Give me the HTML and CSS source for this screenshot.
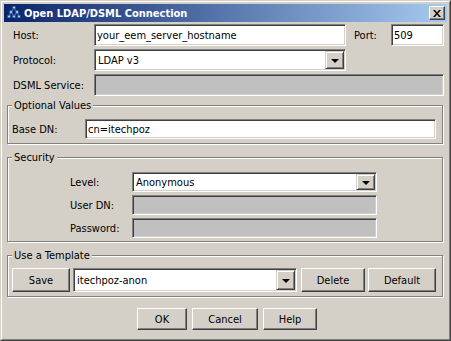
FILE: index.html
```html
<!DOCTYPE html>
<html lang="en">
<head>
    <meta charset="UTF-8">
    <title>Open LDAP/DSML Connection</title>
    <link rel="stylesheet" href="styles.css">
</head>
<body>
    <div class="window">
        <div class="frame">
            <div class="title-bar">
                <svg class="title-icon" viewBox="0 0 16 16" width="16" height="16">
                    <g stroke="#5a86c8" stroke-width="1">
                        <line x1="8" y1="3" x2="5" y2="7"/>
                        <line x1="8" y1="3" x2="11" y2="7"/>
                        <line x1="5" y1="7" x2="3" y2="11"/>
                        <line x1="5" y1="7" x2="8" y2="11"/>
                        <line x1="11" y1="7" x2="8" y2="11"/>
                        <line x1="11" y1="7" x2="13" y2="11"/>
                    </g>
                    <g fill="#b8d4f4" stroke="#2d5aa0" stroke-width="0.6">
                        <rect x="6.8" y="1.3" width="2.4" height="2.4"/>
                        <rect x="3.8" y="5.8" width="2.4" height="2.4"/>
                        <rect x="9.8" y="5.8" width="2.4" height="2.4"/>
                        <rect x="1.8" y="10.3" width="2.4" height="2.4"/>
                        <rect x="6.8" y="10.3" width="2.4" height="2.4"/>
                        <rect x="11.8" y="10.3" width="2.4" height="2.4"/>
                    </g>
                </svg>
                <span class="title-text">Open LDAP/DSML Connection</span>
                <button class="close-btn" aria-label="Close">
                    <svg viewBox="0 0 8 7" width="8" height="7">
                        <path d="M0 0h2l2 2.5 2-2.5h2l-3 3.5 3 3.5h-2l-2-2.5-2 2.5h-2l3-3.5z" fill="#000"/>
                    </svg>
                </button>
            </div>

            <div class="client">
                <div class="connection-grid">
                    <span class="field-label">Host:</span>
                    <input class="text-field" type="text" value="your_eem_server_hostname">
                    <span class="field-label port-label">Port:</span>
                    <input class="text-field" type="text" value="509">

                    <span class="field-label">Protocol:</span>
                    <div class="combo">
                        <span class="combo-value">LDAP v3</span>
                        <span class="combo-arrow"></span>
                    </div>
                    <span></span>
                    <span></span>

                    <span class="field-label">DSML Service:</span>
                    <input class="text-field dsml-field" type="text" disabled>
                </div>

                <fieldset class="group optional-group">
                    <legend>Optional Values</legend>
                    <div class="base-grid">
                        <span class="field-label">Base DN:</span>
                        <input class="text-field small" type="text" value="cn=itechpoz">
                    </div>
                </fieldset>

                <fieldset class="group security-group">
                    <legend>Security</legend>
                    <div class="security-grid">
                        <span class="field-label">Level:</span>
                        <div class="combo small">
                            <span class="combo-value">Anonymous</span>
                            <span class="combo-arrow"></span>
                        </div>
                        <span class="field-label">User DN:</span>
                        <input class="text-field small" type="text" disabled>
                        <span class="field-label">Password:</span>
                        <input class="text-field small" type="password" disabled>
                    </div>
                </fieldset>

                <fieldset class="group template-group">
                    <legend>Use a Template</legend>
                    <div class="template-row">
                        <button class="btn save-btn">Save</button>
                        <div class="combo template-combo">
                            <span class="combo-value">itechpoz-anon</span>
                            <span class="combo-arrow"></span>
                        </div>
                        <button class="btn delete-btn">Delete</button>
                        <button class="btn default-btn">Default</button>
                    </div>
                </fieldset>

                <div class="dialog-buttons">
                    <button class="btn ok-btn">OK</button>
                    <button class="btn cancel-btn">Cancel</button>
                    <button class="btn help-btn">Help</button>
                </div>
            </div>
        </div>
    </div>
</body>
</html>
```

FILE: styles.css
```css
body, html {
    margin: 0;
    padding: 0;
    background-color: #D4D0C8;
}
body {
    font-family: "DejaVu Sans Condensed", "Liberation Sans", sans-serif;
    font-size: 11px;
    color: #000;
}

/* window frame, classic raised bevel */
.window {
    width: 451px;
    height: 341px;
    box-sizing: border-box;
    border: 1px solid;
    border-color: #D4D0C8 #404040 #404040 #D4D0C8;
}
.frame {
    height: 100%;
    box-sizing: border-box;
    border: 1px solid;
    border-color: #FFFFFF #808080 #808080 #FFFFFF;
    padding: 2px;
    display: flex;
    flex-direction: column;
}

.title-bar {
    height: 18px;
    flex: none;
    display: flex;
    align-items: center;
    padding: 0 2px;
    background: linear-gradient(to right, #0A246A, #A6CAF0);
}
.title-icon {
    flex: none;
    margin-right: 2px;
}
.title-text {
    flex: 1;
    color: #FFFFFF;
    font-weight: bold;
    font-size: 11px;
    white-space: nowrap;
}
.close-btn {
    flex: none;
    width: 16px;
    height: 14px;
    padding: 0;
    display: flex;
    align-items: center;
    justify-content: center;
    background: #D4D0C8;
    border: 1px solid;
    border-color: #FFFFFF #404040 #404040 #FFFFFF;
    box-shadow: inset -1px -1px 0 #808080;
}

.client {
    flex: 1;
    display: flex;
    flex-direction: column;
    padding: 2px 3px 0 3px;
}

.field-label {
    white-space: nowrap;
    align-self: center;
}

/* top rows: host / protocol / dsml */
.connection-grid {
    display: grid;
    grid-template-columns: 81px 252px 45px 53px;
    grid-auto-rows: 22px;
    row-gap: 3px;
    padding-left: 6px;
}
.port-label {
    padding-left: 8px;
}
.dsml-field {
    grid-column: 2 / 5;
}

/* sunken text field */
.text-field {
    box-sizing: border-box;
    width: 100%;
    height: 100%;
    margin: 0;
    padding: 0 2px;
    font: inherit;
    color: #000;
    background: #FFFFFF;
    border: 1px solid;
    border-color: #808080 #FFFFFF #FFFFFF #808080;
    box-shadow: inset 1px 1px 0 #404040, inset -1px -1px 0 #D4D0C8;
    outline: none;
}
.text-field:disabled {
    background: #C0C0C0;
}

.combo {
    box-sizing: border-box;
    display: flex;
    align-items: stretch;
    background: #FFFFFF;
    border: 1px solid;
    border-color: #808080 #FFFFFF #FFFFFF #808080;
    box-shadow: inset 1px 1px 0 #404040, inset -1px -1px 0 #D4D0C8;
    padding: 1px;
}
.combo-value {
    flex: 1;
    display: flex;
    align-items: center;
    padding-left: 2px;
    white-space: nowrap;
}
.combo-arrow {
    flex: none;
    width: 19px;
    box-sizing: border-box;
    display: flex;
    align-items: center;
    justify-content: center;
    background: #D4D0C8;
    border: 1px solid;
    border-color: #D4D0C8 #404040 #404040 #D4D0C8;
    box-shadow: inset 1px 1px 0 #FFFFFF, inset -1px -1px 0 #808080;
}
.combo-arrow::after {
    content: "";
    border-left: 4px solid transparent;
    border-right: 4px solid transparent;
    border-top: 4px solid #000;
    margin-top: 1px;
}

/* etched group boxes */
.group {
    margin: 7px 1px 0 0;
    padding: 0 6px 4px 4px;
    min-width: 0;
    border: 1px solid #808080;
    box-shadow: inset 1px 1px 0 #FFFFFF, 1px 1px 0 #FFFFFF;
}
.group legend {
    padding: 0 2px;
    line-height: 13px;
    background: #D4D0C8;
}
.optional-group {
    margin-top: 3px;
    padding-top: 7px;
}
.security-group {
    padding-top: 8px;
    padding-bottom: 3px;
}
.template-group {
    padding-top: 6px;
}

.base-grid {
    display: grid;
    grid-template-columns: 73px 1fr;
    grid-auto-rows: 20px;
}
.security-grid {
    display: grid;
    grid-template-columns: 62px 245px;
    grid-auto-rows: 20px;
    row-gap: 3px;
    padding-left: 58px;
}

.template-row {
    display: flex;
    height: 24px;
}
.template-combo {
    width: 224px;
    margin: 0 4px 0 3px;
}

/* raised push buttons */
.btn {
    box-sizing: border-box;
    height: 100%;
    margin: 0;
    padding: 0;
    font: inherit;
    color: #000;
    background: #D4D0C8;
    border: 1px solid;
    border-color: #FFFFFF #404040 #404040 #FFFFFF;
    box-shadow: inset -1px -1px 0 #808080;
}
.save-btn { width: 58px; }
.delete-btn { width: 64px; margin-right: 3px; }
.default-btn { width: 68px; }

.dialog-buttons {
    display: flex;
    justify-content: center;
    gap: 5px;
    height: 22px;
    margin-top: 11px;
    padding-left: 3px;
}
.ok-btn { width: 50px; }
.cancel-btn { width: 66px; }
.help-btn { width: 54px; }
```
